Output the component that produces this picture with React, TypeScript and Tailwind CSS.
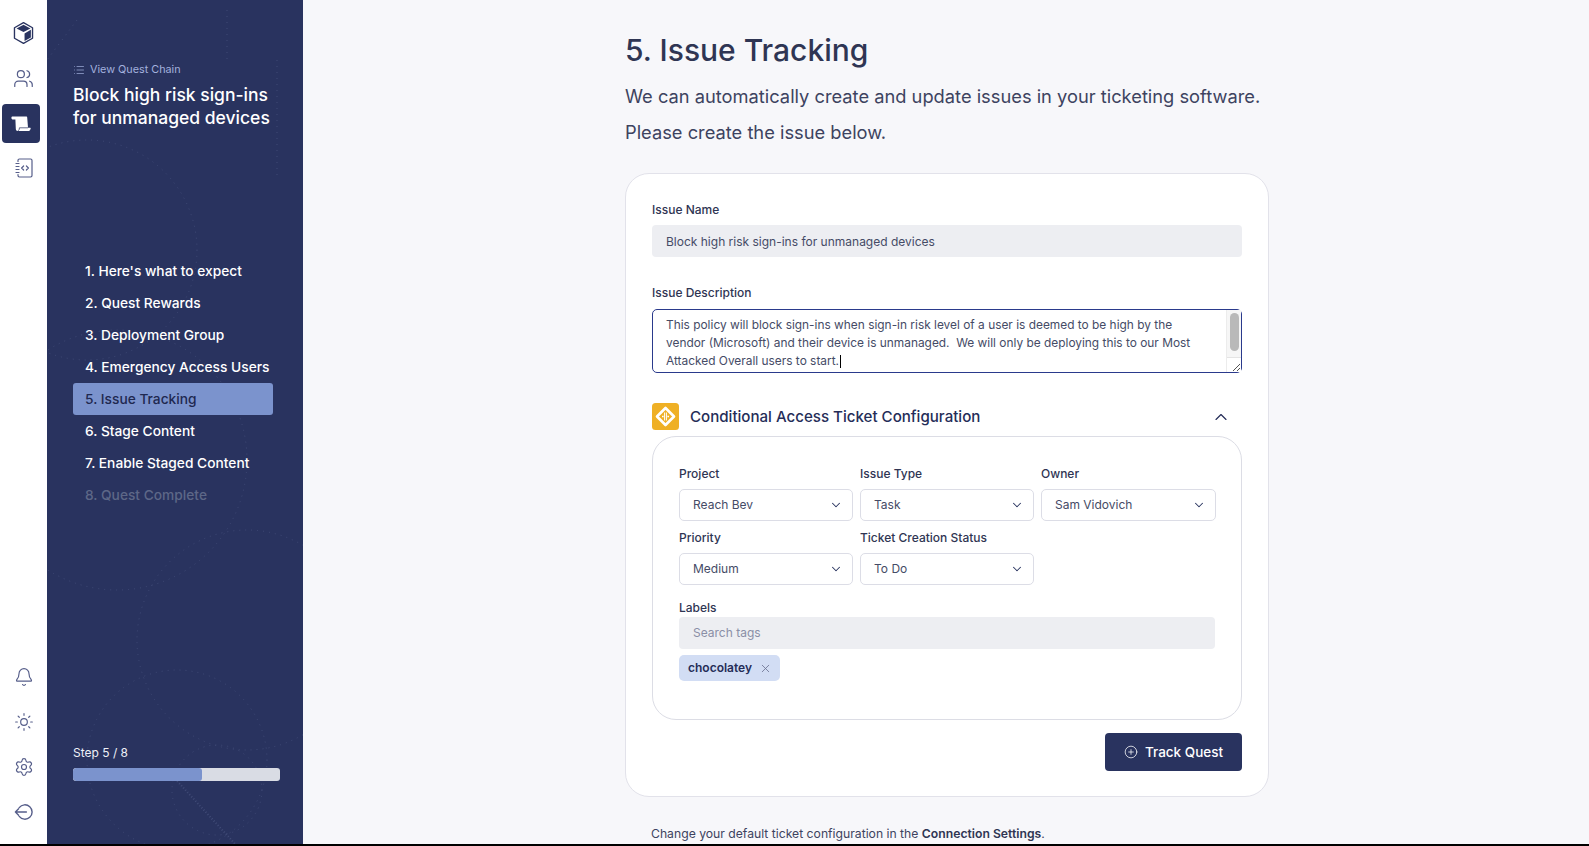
import { ChevronDown, ChevronUp, X, List, CirclePlus, Users, Bell, Sun, Settings } from "lucide-react"

const steps = [
  "1. Here's what to expect",
  "2. Quest Rewards",
  "3. Deployment Group",
  "4. Emergency Access Users",
  "5. Issue Tracking",
  "6. Stage Content",
  "7. Enable Staged Content",
  "8. Quest Complete",
]

function CubeIcon() {
  return (
    <svg width="21" height="24" viewBox="0 0 20 22" fill="none">
      <path d="M10 1.2 18.6 6v10L10 20.8 1.4 16V6z" stroke="#2a3460" strokeWidth="1.3" strokeLinejoin="round" />
      <path d="M10 3.2 16.6 6.6 10 10 3.4 6.6z" fill="#2a3460" />
      <path d="M11 11.4 17 8v7.2l-6 3.4z" fill="#2a3460" />
    </svg>
  )
}

function ScrollIcon() {
  return (
    <svg width="20" height="16" viewBox="0 0 20 16" fill="none">
      <path d="M1.8.5H15.2c.6 0 1 .4 1 1L17 11.8h2.2c.4 0 .6.3.5.6-.3 1.6-1.3 2.6-2.8 2.6H6.8c-1.2 0-2-.8-2-2.2L4.4 3.4H2C1 3.4.4 2.8.4 1.9S.9.5 1.8.5z" fill="#fff" />
      <path d="M6.8 15c1-.4 1.6-1.4 1.6-3.2H17" stroke="#29335f" strokeWidth="0.7" />
    </svg>
  )
}

function NotebookIcon() {
  return (
    <svg width="18" height="20" viewBox="0 0 18 20" fill="none" stroke="#565e8a" strokeWidth="1.2" strokeLinecap="round" strokeLinejoin="round">
      <path d="M3 3.5V2.4C3 1.6 3.6 1 4.4 1h11.2c.8 0 1.4.6 1.4 1.4v15.2c0 .8-.6 1.4-1.4 1.4H4.4C3.6 19 3 18.4 3 17.6v-1.1" />
      <path d="M1 5.5h3M1 8.5h3M1 11.5h3M1 14.5h3" />
      <path d="M8.6 8 6.6 10l2 2M11.4 8l2 2-2 2" />
    </svg>
  )
}

function ExitIcon() {
  return (
    <svg width="20" height="20" viewBox="0 0 20 20" fill="none" stroke="#565e8a" strokeWidth="1.4" strokeLinecap="round" strokeLinejoin="round">
      <path d="M5.2 5.6A7.2 7.2 0 1 1 5.2 14.4" />
      <path d="M12.4 10H1.4M4.6 6.8 1.4 10l3.2 3.2" />
    </svg>
  )
}

function JiraMark() {
  return (
    <svg width="27" height="27" viewBox="0 0 27 27" fill="none">
      <rect width="27" height="27" rx="3.5" fill="#efb025" />
      <path d="M13.5 5 22 13.5 13.5 22 5 13.5z" stroke="#fff" strokeWidth="2.6" strokeLinejoin="round" />
      <path d="M12.6 9.5v8M14.4 9.5v8" stroke="#fff" strokeWidth="1" />
      <path d="M10 13.5h1.6M15.4 13.5H17" stroke="#fff" strokeWidth="1.6" />
    </svg>
  )
}

function Texture() {
  return (
    <svg className="absolute inset-0 h-full w-full" viewBox="0 0 256 844" fill="none" stroke="#8f9bc8" strokeWidth="1" strokeDasharray="1 5" opacity="0.22">
      <circle cx="40" cy="250" r="110" />
      <circle cx="70" cy="460" r="130" />
      <circle cx="200" cy="640" r="110" />
      <circle cx="130" cy="760" r="90" />
      <circle cx="170" cy="790" r="45" />
      <path d="M120 770 190 846" strokeWidth="2" strokeDasharray="1 2" />
      <path d="M30 20 0 60M180 10v50M230 60v120" />
    </svg>
  )
}

function Field({ label, value }: { label: string; value: string }) {
  return (
    <div className="flex min-w-0 flex-col">
      <label className="mb-[7px] text-[12px] leading-[16px] font-medium text-[#2f3553]">{label}</label>
      <div className="flex h-8 items-center justify-between rounded-[5px] border border-[#dcdde6] bg-white pr-[9px] pl-[13px] text-[12px] text-[#454b66]">
        <span>{value}</span>
        <ChevronDown size={14} strokeWidth={1.8} className="text-[#2a3460]" />
      </div>
    </div>
  )
}

export default function App() {
  return (
    <div className="flex h-[846px] flex-col overflow-hidden bg-black font-['Inter','Liberation_Sans',sans-serif]">
      <div className="flex h-[844px] min-h-0">
        {/* icon rail */}
        <aside className="flex w-[47px] flex-none flex-col items-center bg-white pt-[23px] pb-[22px]">
          <div className="flex h-5 w-full items-center justify-center">
            <CubeIcon />
          </div>
          <div className="mt-[25px] flex h-5 w-full items-center justify-center">
            <Users size={21} strokeWidth={1.4} className="text-[#565e8a]" />
          </div>
          <div className="mt-[16px] mr-[5px] flex h-[39px] w-[38px] items-center justify-center rounded-[4px] bg-[#29335f]">
            <ScrollIcon />
          </div>
          <div className="mt-[15px] flex h-5 w-full items-center justify-center">
            <NotebookIcon />
          </div>
          <div className="mt-auto flex flex-col items-center gap-[25px] text-[#565e8a]">
            <Bell size={20} strokeWidth={1.4} />
            <Sun size={20} strokeWidth={1.4} />
            <Settings size={20} strokeWidth={1.4} />
            <ExitIcon />
          </div>
        </aside>

        {/* quest nav */}
        <nav className="relative flex w-[256px] flex-none flex-col bg-[#29335f] pt-[63px] pr-[30px] pb-[63px] pl-[26px] text-white">
          <Texture />
          <div className="relative flex h-[14px] items-center gap-[5px] text-[10.8px] text-[#a3b1de]">
            <List size={12} strokeWidth={1.4} />
            <span>View Quest Chain</span>
          </div>
          <h2 className="relative mt-[6px] -mr-[10px] text-[17.5px] leading-[23px] font-medium text-white">
            Block high risk sign-ins
            <br />
            for unmanaged devices
          </h2>
          <ol className="relative mt-[126px] flex flex-col">
            {steps.map((step, i) => (
              <li
                key={step}
                className={`flex h-8 items-center rounded-[3px] px-[12px] text-[13.75px] font-medium whitespace-nowrap ${
                  i === 4 ? "bg-[#7b93cd] text-[#1f2850]" : i === 7 ? "text-[#5d6787]" : "text-white"
                }`}
              >
                {step}
              </li>
            ))}
          </ol>
          <div className="relative mt-auto -mr-[7px]">
            <div className="text-[12px] leading-[16px] text-[#eef0f7]">Step 5 / 8</div>
            <div className="mt-[7px] h-[13px] overflow-hidden rounded-[3px] bg-[#d9dce4]">
              <div className="h-full w-[62.5%] rounded-[3px] bg-[#7b93cd]" />
            </div>
          </div>
        </nav>

        {/* main content */}
        <main className="min-w-0 flex-1 overflow-hidden bg-[#f7f7fa] pt-[26px] pl-[2px]">
          <div className="mx-auto w-[644px]">
            <h1 className="text-[30px] leading-[48px] font-medium text-[#2f3553]">5. Issue Tracking</h1>
            <p className="mt-[4px] text-[18.3px] leading-[36px] whitespace-nowrap text-[#3d4360]">
              We can automatically create and update issues in your ticketing software.
              <br />
              Please create the issue below.
            </p>

            <section className="mt-[23px] h-[624px] rounded-[24px] border border-[#e2e2ea] bg-white px-[26px] pt-[27px]">
              <label className="block text-[12px] leading-[18px] font-medium text-[#2f3553]">Issue Name</label>
              <div className="mt-[6px] flex h-8 items-center rounded-[4px] bg-[#edeef2] px-[14px] pt-[2px] text-[12px] text-[#454b66]">
                Block high risk sign-ins for unmanaged devices
              </div>

              <label className="mt-[27px] block text-[12px] leading-[18px] font-medium text-[#2f3553]">Issue Description</label>
              <div className="relative mt-[7px] flex h-[64px] rounded-[5px] border border-[#2a3a8c] bg-white">
                <p className="flex-1 py-[6px] pr-[18px] pl-[13px] text-[11.9px] leading-[17.8px] text-[#454b66]">
                  This policy will block sign-ins when sign-in risk level of a user is deemed to be high by the vendor (Microsoft) and their device is unmanaged.&nbsp; We will only be deploying this to our Most Attacked Overall users to start.
                  <span className="ml-px inline-block h-[13px] w-px bg-black align-middle" />
                </p>
                <div className="flex w-[15px] flex-none flex-col border-l border-[#ececec] bg-[#f6f6f6]">
                  <div className="mx-auto mt-[3px] h-[38px] w-[9px] rounded-full bg-[#b9b9b9]" />
                  <div className="mt-auto flex h-[15px] items-end justify-end border-t border-[#e4e4e4] bg-white">
                    <svg width="10" height="10" viewBox="0 0 10 10" stroke="#555" strokeWidth="1">
                      <path d="M9 2 2 9M9 6 6 9" />
                    </svg>
                  </div>
                </div>
              </div>

              <div className="mt-[30px] flex h-[27px] items-center">
                <JiraMark />
                <h3 className="ml-[11px] pt-[1px] text-[15.1px] font-medium text-[#252d58]">Conditional Access Ticket Configuration</h3>
                <ChevronUp size={20} strokeWidth={1.4} className="mr-[11px] ml-auto text-[#252d58]" />
              </div>

              <div className="mt-[6px] h-[284px] rounded-[24px] border border-[#dcdde5] px-[26px] pt-[29px]">
                <div className="grid grid-cols-[174px_174px_175px] gap-x-[7px] gap-y-[9px]">
                  <Field label="Project" value="Reach Bev" />
                  <Field label="Issue Type" value="Task" />
                  <Field label="Owner" value="Sam Vidovich" />
                  <Field label="Priority" value="Medium" />
                  <Field label="Ticket Creation Status" value="To Do" />
                </div>
                <label className="mt-[15px] block text-[12px] leading-[16px] font-medium text-[#2f3553]">Labels</label>
                <div className="mt-[1px] flex h-8 items-center rounded-[4px] bg-[#edeef2] px-[14px] text-[12px] text-[#8a8fa6]">
                  Search tags
                </div>
                <div className="mt-[6px] inline-flex h-[26px] items-center gap-[7px] rounded-[5px] bg-[#d2ddf4] pr-[8px] pl-[9px] text-[12px] font-semibold text-[#252d58]">
                  chocolatey
                  <X size={13} strokeWidth={1.5} className="text-[#6a7090]" />
                </div>
              </div>

              <div className="mt-[13px] flex justify-end">
                <button className="flex h-[38px] w-[137px] items-center justify-center gap-[7px] rounded-[4px] bg-[#29335f] text-[13.5px] font-medium text-white">
                  <CirclePlus size={14} strokeWidth={1.3} />
                  Track Quest
                </button>
              </div>
            </section>

            <p className="mt-[28px] pl-[26px] text-[12.2px] leading-[18px] text-[#3d4360]">
              Change your default ticket configuration in the <strong className="font-semibold text-[#2f3553]">Connection Settings</strong>.
            </p>
          </div>
        </main>
      </div>
    </div>
  )
}
